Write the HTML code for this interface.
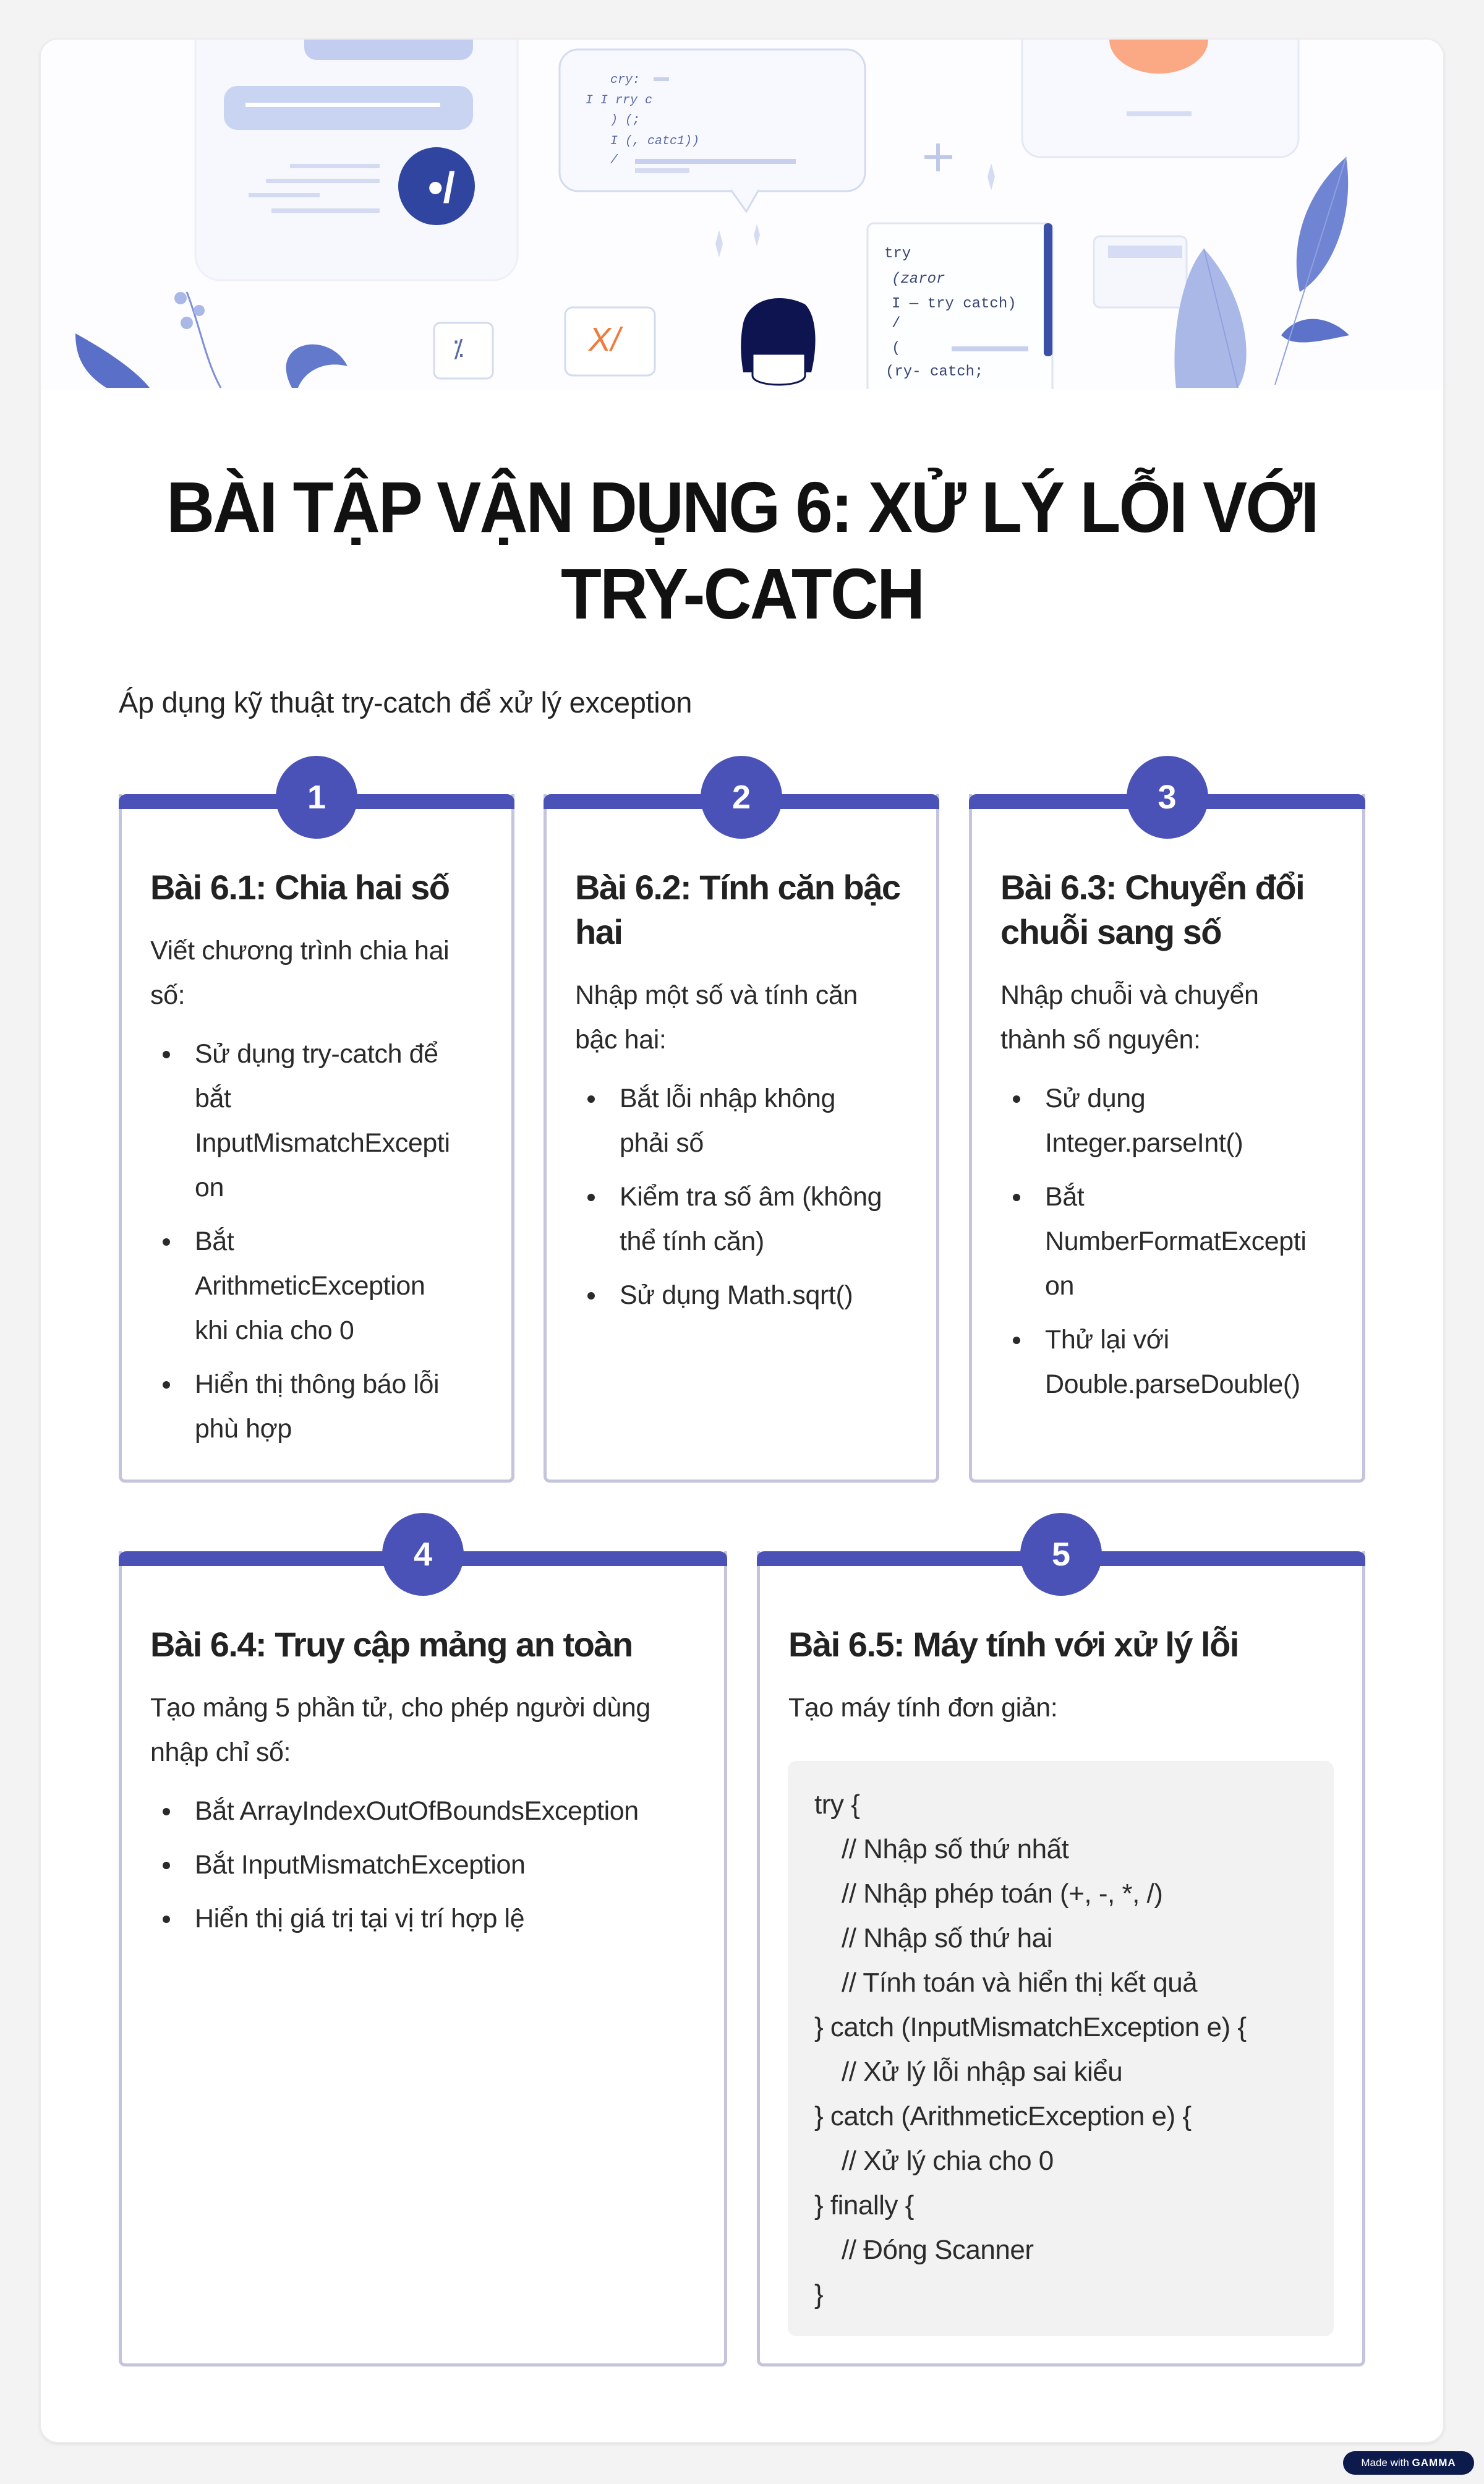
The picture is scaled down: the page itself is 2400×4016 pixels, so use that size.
<!DOCTYPE html>
<html><head><meta charset="utf-8">
<style>
*{margin:0;padding:0;box-sizing:border-box}
html,body{width:2400px;height:4016px;background:#f4f3f3;overflow:hidden}
body{position:relative;font-family:"Liberation Sans","Noto Sans CJK SC",sans-serif;color:#242424}
.outer{position:absolute;left:64px;top:62px;width:2272px;height:3888px;background:#fff;border-radius:30px;box-shadow:0 2px 6px rgba(0,0,0,.08);border:2px solid #ececec;overflow:hidden}
.hero{position:absolute;left:0;top:0}
.title{position:absolute;left:0;width:2400px;top:750px;text-align:center;font-weight:bold;font-size:116px;line-height:140px;color:#111;white-space:nowrap}
.title span{display:inline-block;transform:scaleX(.93);letter-spacing:-3px}
.sub{position:absolute;left:192px;top:1108px;font-size:47px;line-height:56px;white-space:nowrap;letter-spacing:-.3px}
.card{position:absolute;background:#fff;border:5px solid #c4c5dc;border-top:none;border-radius:0 0 10px 10px}
.card .bar{position:absolute;left:-5px;right:-5px;top:0;height:24px;background:#4a52b8;border-radius:12px 12px 0 0}
.card .num{position:absolute;top:-62px;left:50%;width:132px;height:134px;margin-left:-66px;border-radius:50%;background:#4a52b8;color:#fff;font-weight:bold;font-size:54px;line-height:134px;text-align:center}
.in{position:absolute;left:46px;right:30px;top:115px;white-space:nowrap}
h3{font-size:56px;line-height:72px;font-weight:bold;letter-spacing:-1.5px;color:#222}
p{font-size:43px;line-height:72px;margin-top:30px;letter-spacing:-.4px;color:#2a2a2a}
ul{list-style:none;margin-top:23px}
li{position:relative;padding-left:72px;font-size:43px;line-height:72px;margin-bottom:15px;letter-spacing:-.4px;color:#2a2a2a}
li:before{content:"";position:absolute;left:20px;top:31px;width:12px;height:12px;border-radius:50%;background:#2a2a2a}
.code{position:absolute;left:1274px;top:2847px;width:883px;height:930px;background:#f2f2f2;border-radius:14px;padding:35px 0 0 43px;font-size:44px;line-height:72px;color:#2b2b2b;white-space:nowrap;letter-spacing:-.5px}
.code .i{padding-left:44px}
.badge{position:absolute;left:2172px;top:3963px;width:212px;height:38px;border-radius:19px;background:#0d1a4c;color:#fff;font-size:17px;line-height:38px;text-align:center}
.badge b{letter-spacing:1px}
</style></head><body>
<div class="outer">
<svg class="hero" width="2272" height="565" viewBox="64 62 2272 565" xmlns="http://www.w3.org/2000/svg">
<rect x="64" y="62" width="2272" height="565" fill="#fdfdff"/>
<rect x="314" y="20" width="521" height="431" rx="40" fill="#f7f8fd" stroke="#edf0f8" stroke-width="3"/>
<rect x="490" y="40" width="273" height="55" rx="20" fill="#c3cdf0"/>
<rect x="360" y="137" width="403" height="71" rx="22" fill="#c9d4f3"/>
<rect x="395" y="164" width="315" height="7" fill="#fff"/>
<rect x="467" y="263" width="145" height="7" fill="#d3daf1"/>
<rect x="428" y="287" width="184" height="7" fill="#d3daf1"/>
<rect x="400" y="310" width="115" height="7" fill="#d3daf1"/>
<rect x="437" y="335" width="175" height="7" fill="#d3daf1"/>
<ellipse cx="704" cy="299" rx="62" ry="63" fill="#2f45a0"/>
<text x="690" y="325" font-size="70" fill="#fff" font-weight="bold" font-family="Liberation Sans">•/</text>
<rect x="903" y="78" width="494" height="229" rx="30" fill="#f7f9fe" stroke="#d3dbef" stroke-width="3"/>
<path d="M1180 305 L1205 340 L1225 305" fill="#f7f9fe" stroke="#d3dbef" stroke-width="3"/>
<g font-family="Liberation Mono" font-size="20" fill="#5a67a6" font-style="italic">
<text x="985" y="132">cry:</text><text x="945" y="165">I  I rry c</text><text x="985" y="197">) (;</text><text x="985" y="231">I        (, catc1))</text><text x="985" y="262">/</text>
</g>
<rect x="1055" y="123" width="25" height="6" fill="#c7d0ee"/>
<rect x="1025" y="255" width="260" height="8" fill="#c7d0ee"/>
<rect x="1025" y="270" width="88" height="8" fill="#d5dbf1"/>
<path d="M1515 230 v45 M1493 252 h45" stroke="#c0c9ea" stroke-width="6"/>
<path d="M1601 262 l6 22 l-6 22 l-6 -22z" fill="#d5dcf2"/>
<path d="M1161 370 l6 22 l-6 22 l-6 -22z" fill="#d5dcf2"/>
<path d="M1222 360 l5 18 l-5 18 l-5 -18z" fill="#d5dcf2"/>
<rect x="1651" y="30" width="447" height="222" rx="30" fill="#f7f9fe" stroke="#e4e9f5" stroke-width="3"/>
<path d="M1792 62 h160 a80 55 0 0 1 -160 0z" fill="#fba985"/>
<rect x="1820" y="178" width="105" height="8" fill="#d6dcf1"/>
<rect x="1401" y="359" width="299" height="280" rx="10" fill="#fdfeff" stroke="#dfe4f3" stroke-width="3"/>
<rect x="1686" y="359" width="14" height="215" rx="6" fill="#3c4fa6"/>
<g font-family="Liberation Mono" font-size="24" fill="#3a4574">
<text x="1428" y="414">try</text><text x="1440" y="455" font-style="italic">(zaror</text><text x="1440" y="495">I —  try catch)</text><text x="1440" y="527">/</text><text x="1440" y="567">(</text><text x="1430" y="605">(ry-  catch;</text>
</g>
<rect x="1537" y="558" width="124" height="8" fill="#c7d0ee"/>
<rect x="1767" y="380" width="150" height="115" rx="10" fill="#f5f7fd" stroke="#dfe4f3" stroke-width="3"/>
<rect x="1790" y="395" width="120" height="20" fill="#d6dcf3"/>
<path d="M1945 400 C2010 470 2030 580 2000 625 L1900 625 C1890 540 1910 440 1945 400z" fill="#aab8e8"/>
<path d="M2175 252 C2120 300 2080 380 2100 470 C2150 440 2190 350 2175 252z" fill="#6f84d2"/>
<path d="M2070 540 C2100 500 2150 510 2180 540 C2130 550 2090 560 2070 540z" fill="#5d73c9"/>
<path d="M1945 400 L2000 625 M2175 252 L2060 620" stroke="#8fa0e0" stroke-width="2" fill="none"/>
<path d="M120 537 C180 570 220 600 240 625 L170 625 C130 600 120 570 120 537z" fill="#5a70c8"/>
<path d="M470 625 C430 550 530 530 560 590 C520 580 490 600 480 625z" fill="#6279cc"/>
<path d="M300 470 C320 520 330 580 355 625" stroke="#7e90d6" stroke-width="3" fill="none"/>
<circle cx="290" cy="480" r="10" fill="#aab8e8"/><circle cx="300" cy="520" r="10" fill="#aab8e8"/><circle cx="320" cy="500" r="9" fill="#aab8e8"/>
<rect x="700" y="520" width="95" height="90" rx="10" fill="#fff" stroke="#d3dbef" stroke-width="3"/>
<text x="730" y="575" font-size="40" fill="#5a67a6" font-family="Liberation Sans">⁒</text>
<rect x="912" y="495" width="145" height="110" rx="12" fill="#fff" stroke="#d3dbef" stroke-width="3"/>
<text x="950" y="565" font-size="54" fill="#f07b3a" font-style="italic" font-family="Liberation Sans">X/</text>
<path d="M1200 520 C1210 480 1260 470 1300 490 C1320 510 1320 560 1310 600 L1200 600 C1195 570 1195 545 1200 520z" fill="#0e1450"/>
<path d="M1215 570 h85 v35 c0 20 -85 20 -85 0z" fill="#fff" stroke="#0e1450" stroke-width="3"/>
</svg>
</div>
<div class="title"><span>BÀI TẬP VẬN DỤNG 6: XỬ LÝ LỖI VỚI</span><br><span>TRY-CATCH</span></div>
<div class="sub">Áp dụng kỹ thuật try-catch để xử lý exception</div>

<div class="card" style="left:192px;top:1284px;width:640px;height:1113px"><div class="bar"></div><div class="num">1</div>
<div class="in"><h3>Bài 6.1: Chia hai số</h3><p>Viết chương trình chia hai<br>số:</p>
<ul><li>Sử dụng try-catch để<br>bắt<br>InputMismatchExcepti<br>on</li><li>Bắt<br>ArithmeticException<br>khi chia cho 0</li><li>Hiển thị thông báo lỗi<br>phù hợp</li></ul></div></div>

<div class="card" style="left:879px;top:1284px;width:640px;height:1113px"><div class="bar"></div><div class="num">2</div>
<div class="in"><h3>Bài 6.2: Tính căn bậc<br>hai</h3><p>Nhập một số và tính căn<br>bậc hai:</p>
<ul><li>Bắt lỗi nhập không<br>phải số</li><li>Kiểm tra số âm (không<br>thể tính căn)</li><li>Sử dụng Math.sqrt()</li></ul></div></div>

<div class="card" style="left:1567px;top:1284px;width:641px;height:1113px"><div class="bar"></div><div class="num">3</div>
<div class="in"><h3>Bài 6.3: Chuyển đổi<br>chuỗi sang số</h3><p>Nhập chuỗi và chuyển<br>thành số nguyên:</p>
<ul><li>Sử dụng<br>Integer.parseInt()</li><li>Bắt<br>NumberFormatExcepti<br>on</li><li>Thử lại với<br>Double.parseDouble()</li></ul></div></div>

<div class="card" style="left:192px;top:2508px;width:984px;height:1318px"><div class="bar"></div><div class="num">4</div>
<div class="in"><h3>Bài 6.4: Truy cập mảng an toàn</h3><p>Tạo mảng 5 phần tử, cho phép người dùng<br>nhập chỉ số:</p>
<ul><li>Bắt ArrayIndexOutOfBoundsException</li><li>Bắt InputMismatchException</li><li>Hiển thị giá trị tại vị trí hợp lệ</li></ul></div></div>

<div class="card" style="left:1224px;top:2508px;width:984px;height:1318px"><div class="bar"></div><div class="num">5</div>
<div class="in"><h3>Bài 6.5: Máy tính với xử lý lỗi</h3><p>Tạo máy tính đơn giản:</p></div></div>
<div class="code">try {<br><span class="i">// Nhập số thứ nhất</span><br><span class="i">// Nhập phép toán (+, -, *, /)</span><br><span class="i">// Nhập số thứ hai</span><br><span class="i">// Tính toán và hiển thị kết quả</span><br>} catch (InputMismatchException e) {<br><span class="i">// Xử lý lỗi nhập sai kiểu</span><br>} catch (ArithmeticException e) {<br><span class="i">// Xử lý chia cho 0</span><br>} finally {<br><span class="i">// Đóng Scanner</span><br>}</div>

<div class="badge">Made with <b>GAMMA</b></div>
</body></html>
